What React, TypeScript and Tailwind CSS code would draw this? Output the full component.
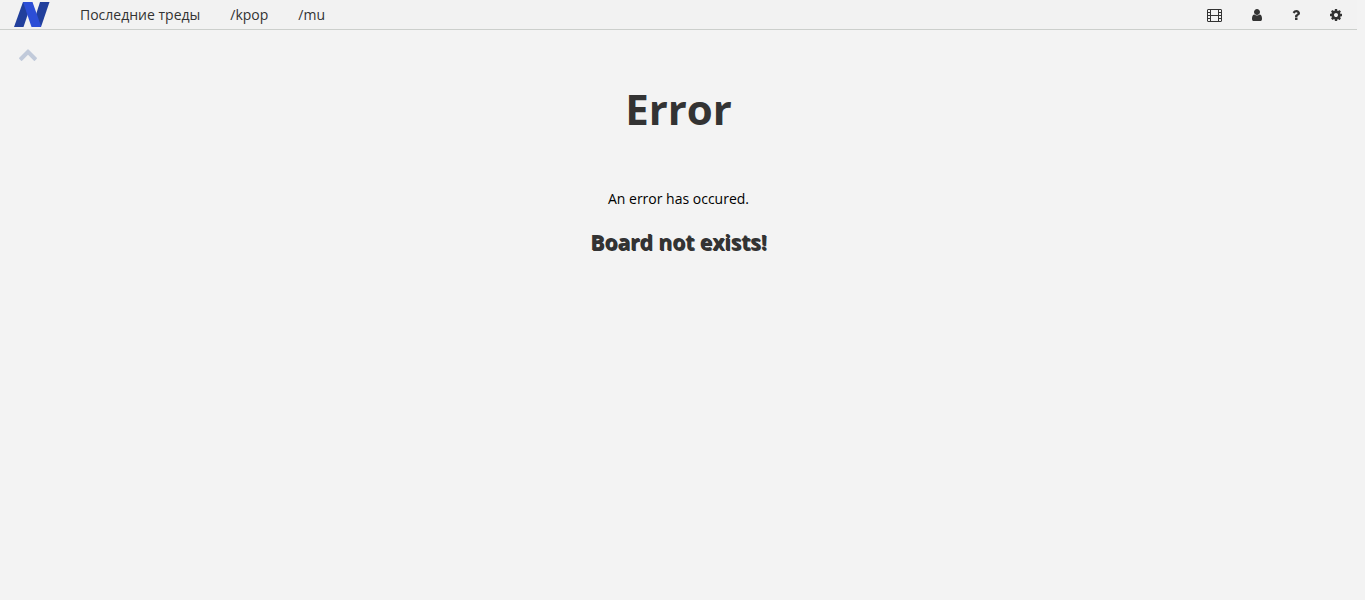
import type { ReactNode } from "react";

const links = [
  { label: "Последние треды", href: "#last" },
  { label: "/kpop", href: "#kpop" },
  { label: "/mu", href: "#mu" },
];

const USER =
  "M1536 1399q0 109-62.5 187t-150.5 78h-854q-88 0-150.5-78t-62.5-187q0-85 8.5-160.5t31.5-152 58.5-131 94-89 134.5-34.5q131 128 313 128t313-128q76 0 134.5 34.5t94 89 58.5 131 31.5 152 8.5 160.5zm-256-887q0 159-112.5 271.5t-271.5 112.5-271.5-112.5-112.5-271.5 112.5-271.5 271.5-112.5 271.5 112.5 112.5 271.5z";
const QUESTION =
  "M1088 1256v240q0 16-12 28t-28 12h-240q-16 0-28-12t-12-28v-240q0-16 12-28t28-12h240q16 0 28 12t12 28zm316-600q0 54-15.5 101t-35 76.5-55 59.5-57.5 43.5-61 35.5q-41 23-68.5 65t-27.5 67q0 17-12 32.5t-28 15.5h-240q-15 0-25.5-18.5t-10.5-37.5v-45q0-83 65-156.5t143-108.5q59-27 84-56t25-76q0-42-46.5-74t-107.5-32q-65 0-108 29-35 25-107 115-13 16-31 16-12 0-25-8l-164-125q-13-10-15.5-25t5.5-28q160-266 464-266 80 0 161 31t146 83 106 127.5 41 158.5z";
const COG =
  "M1152 896q0-106-75-181t-181-75-181 75-75 181 75 181 181 75 181-75 75-181zm512-109v222q0 12-8 23t-20 13l-185 28q-19 54-39 91 35 50 107 138 10 12 10 25t-9 23q-27 37-99 108t-94 71q-12 0-26-9l-138-108q-44 23-91 38-16 136-29 186-7 28-36 28h-222q-14 0-24.5-8.5t-11.5-21.5l-28-184q-49-16-90-37l-141 107q-10 9-25 9-14 0-25-11-126-114-165-168-7-10-7-23 0-12 8-23 15-21 51-66.5t54-70.5q-27-50-41-99l-183-27q-13-2-21-12.5t-8-23.5v-222q0-12 8-23t19-13l186-28q14-46 39-92-40-57-107-138-10-12-10-24 0-10 9-23 26-36 98.5-107.5t94.5-71.5q13 0 26 10l138 107q44-23 91-38 16-136 29-186 7-28 36-28h222q14 0 24.5 8.5t11.5 21.5l28 184q49 16 90 37l142-107q9-9 24-9 13 0 25 10 129 119 165 170 7 8 7 22 0 12-8 23-15 21-51 66.5t-54 70.5q26 50 41 98l183 28q13 2 21 12.5t8 23.5z";
const CHEVRON =
  "M1683 1331l-166 165q-19 19-45 19t-45-19l-531-531-531 531q-19 19-45 19t-45-19l-166-165q-19-19-19-45.5t19-45.5l742-741q19-19 45-19t45 19l742 741q19 19 19 45.5t-19 45.5z";

function Glyph({ d, viewBox, className }: { d: string; viewBox: string; className: string }) {
  return (
    <svg viewBox={viewBox} className={className} fill="currentColor" aria-hidden="true">
      <path d={d} />
    </svg>
  );
}

function Film() {
  return (
    <svg viewBox="0 0 15 14" className="h-[14px] w-[15px]" aria-hidden="true">
      <rect x="0.5" y="1.5" width="14" height="12" rx="0.5" fill="none" stroke="currentColor" />
      <path
        d="M3.500 1v13M11.500 1v13M3.500 7.500h8M0 4.500h3.500M0 7.500h3.500M0 10.500h3.500M11.500 4.500H15M11.500 7.500H15M11.500 10.500H15"
        fill="none"
        stroke="currentColor"
      />
    </svg>
  );
}

function Logo() {
  return (
    <svg viewBox="0 0 36 25" className="h-[25px] w-9" aria-hidden="true">
      <path d="M9 0h9L9.500 25H0z" fill="#213f9c" />
      <path d="M26 0h9.500L27 25h-9z" fill="#213f9c" />
      <path d="M9 0h9.500l8.500 24-.5 1H17.500z" fill="#2c4ed6" />
    </svg>
  );
}

function IconButton({ label, children }: { label: string; children: ReactNode }) {
  return (
    <button type="button" aria-label={label} className="flex items-center px-[15px]">
      {children}
    </button>
  );
}

export default function App() {
  return (
    <div className="min-h-screen bg-[#f3f3f3] pr-2 font-['Open_Sans','Noto_Sans',sans-serif] text-sm text-black">
      <header className="flex h-[30px] items-stretch justify-between border-b border-[#cccfcc] bg-[#f2f2f2] text-[#333]">
        <nav className="flex items-center">
          <a href="#home" aria-label="Home" className="mr-4 flex px-[14px]">
            <Logo />
          </a>
          {links.map((l) => (
            <a key={l.label} href={l.href} className="mr-[30px] whitespace-nowrap">
              {l.label}
            </a>
          ))}
        </nav>
        <div className="flex">
          <IconButton label="Videos">
            <Film />
          </IconButton>
          <IconButton label="Account">
            <Glyph d={USER} viewBox="256 0 1280 1792" className="h-[14px] w-[10px]" />
          </IconButton>
          <IconButton label="Help">
            <Glyph d={QUESTION} viewBox="384 0 1024 1792" className="h-[14px] w-2" />
          </IconButton>
          <IconButton label="Settings">
            <Glyph d={COG} viewBox="128 0 1536 1792" className="h-[14px] w-3" />
          </IconButton>
        </div>
      </header>
      <button type="button" aria-label="Scroll to top" className="ml-[18px] mt-[14px] block text-[#c1cada]">
        <Glyph d={CHEVRON} viewBox="0 0 1792 1792" className="size-5" />
      </button>
      <main className="flex flex-col items-center px-4 pt-[15px] text-center">
        <h1 className="text-[42px] leading-[60px] font-bold text-[#333]">Error</h1>
        <p className="mt-[50px] leading-5">An error has occured.</p>
        <h2 className="mt-[18px] text-[21px] leading-[30px] font-bold text-[#333] [text-shadow:1px_1px_0_#333]">
          Board not exists!
        </h2>
      </main>
    </div>
  );
}
